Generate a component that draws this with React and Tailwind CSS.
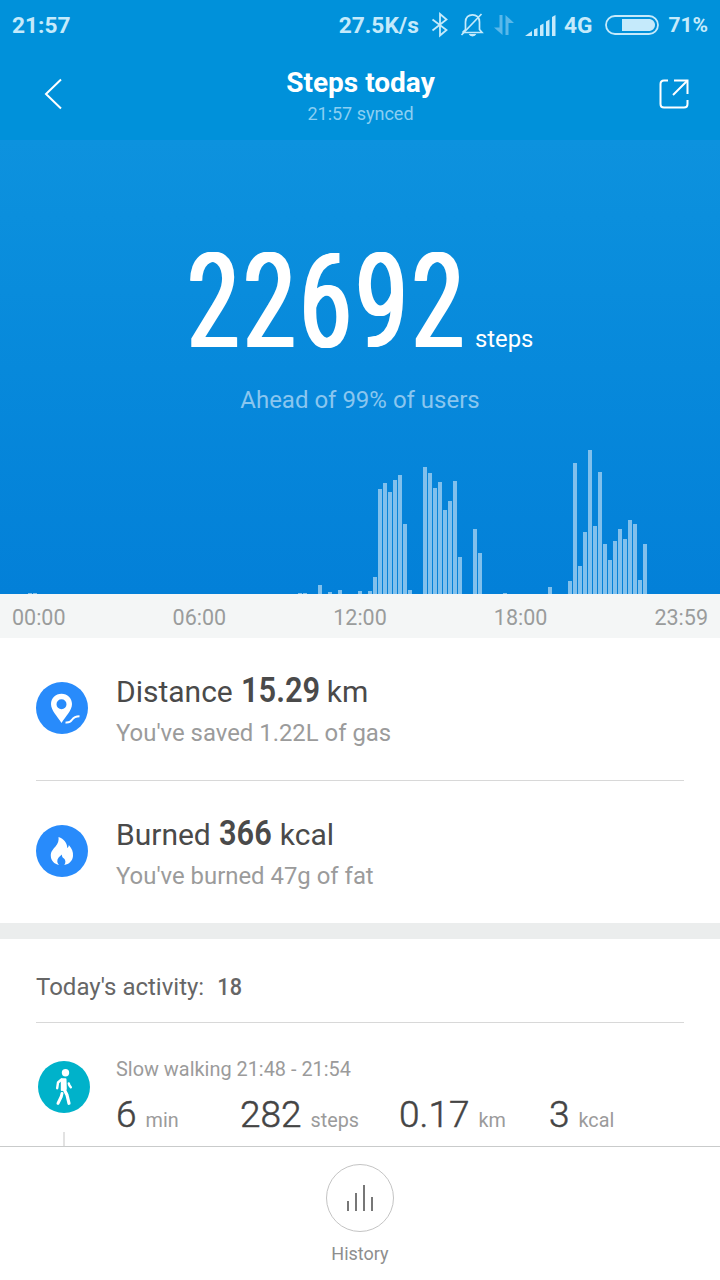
import clsx from "clsx";

// [slot, height] pairs, one slot for every ten minutes of the day
const STEP_BARS = [
    [5, 1], [6, 1], [59, 1], [60, 1], [63, 9], [65, 2], [67, 4], [71, 3],
    [73, 3], [74, 17], [75, 105], [76, 111], [77, 102], [78, 114], [79, 119], [80, 70], [81, 4],
    [84, 127], [85, 121], [86, 106], [87, 112], [88, 84], [89, 93], [90, 113], [91, 37],
    [94, 65], [95, 41], [100, 1], [109, 7],
    [113, 13], [114, 131], [115, 28], [116, 62], [117, 144], [118, 68], [119, 122], [120, 50],
    [121, 34], [122, 53], [123, 65], [124, 55], [125, 74], [126, 70], [127, 14], [128, 50],
];

const slots = Array.from({length: 143}, (_, i) => {
    const bar = STEP_BARS.find(([slot]) => slot === i);
    return bar ? bar[1] : 0;
});

const BluetoothIcon = () => (
    <svg width="18" height="26" viewBox="0 0 18 26" fill="none" stroke="currentColor" strokeWidth="1.8">
        <path d="M1.5 7.5 L15.5 18 L9 23.5 V2 L15.5 7.5 L1.5 18.5"/>
    </svg>
);

const MutedBellIcon = () => (
    <svg width="24" height="26" viewBox="0 0 24 26" fill="none" stroke="currentColor" strokeWidth="1.7">
        <path d="M2.5 20.5 H22 L19.5 17.5 V10 C19.5 5.5 16.5 2.8 12.5 2.8 C8.5 2.8 5.5 5.5 5.5 10 V17.5 L2.5 20.5"/>
        <path d="M1.5 23 L21.5 2"/>
        <path d="M9.5 22 C10.5 24.2 14.5 24.2 15.5 22" fill="currentColor"/>
    </svg>
);

const DataIcon = () => (
    <svg width="20" height="20" viewBox="0 0 20 20" fill="currentColor">
        <path d="M5.5 0 H8.5 V20 L0 12.5 H5.5 Z"/>
        <path d="M11.5 0 L20 8 H14.5 V20 H11.5 Z"/>
    </svg>
);

const SignalIcon = () => (
    <svg width="31" height="22" viewBox="0 0 31 22" fill="currentColor">
        <path d="M0 22 L7 17 V22 Z"/>
        <path d="M9 15.5 L12.5 14 V22 H9 Z"/>
        <path d="M15 11.5 L18.5 9.5 V22 H15 Z"/>
        <path d="M21 7.5 L24.5 5.5 V22 H21 Z"/>
        <path d="M27 3 L30.5 1 V22 H27 Z"/>
    </svg>
);

const BatteryIcon = () => (
    <svg width="54" height="20" viewBox="0 0 54 20">
        <rect x="1" y="1" width="52" height="18" rx="9" fill="none" stroke="currentColor" strokeWidth="1.8"/>
        <path d="M17 4 H43.5 C47.5 4 50 6.7 50 10 C50 13.3 47.5 16 43.5 16 H17 Z" fill="currentColor"/>
    </svg>
);

const ShareIcon = () => (
    <svg width="30" height="30" viewBox="0 0 30 30" fill="none" stroke="currentColor" strokeWidth="2">
        <path d="M9 1.5 H5 C3 1.5 1.5 3 1.5 5 V25 C1.5 27 3 28.5 5 28.5 H25 C27 28.5 28.5 27 28.5 25 V21"/>
        <path d="M15 1.5 H28.5 V15"/>
        <path d="M28.5 1.5 L14 16"/>
    </svg>
);

const DistanceIcon = () => (
    <svg width="52" height="52" viewBox="0 0 52 52">
        <circle cx="26" cy="26" r="26" fill="#288bfb"/>
        <path fillRule="evenodd" fill="#fff"
              d="M25.5 11.7 C31.5 11.7 36 16.2 36 22 C36 28.5 29.5 34.5 25.5 41 C21.5 34.5 15 28.5 15 22 C15 16.2 19.5 11.7 25.5 11.7 Z M25.5 17.2 A5 5 0 1 0 25.5 27.2 A5 5 0 1 0 25.5 17.2 Z"/>
        <path d="M29.5 40.5 C33 41 34.5 40 36 37.8 C37.8 35.2 39.5 34.3 43.5 34.3" fill="none" stroke="#fff"
              strokeWidth="2"/>
    </svg>
);

const FlameIcon = () => (
    <svg width="52" height="52" viewBox="0 0 52 52">
        <circle cx="26" cy="26" r="26" fill="#288bfb"/>
        <path fill="#fff"
              d="M22.5 12 C28 14 31 17.5 31.3 23 C32.3 22.3 32.7 21.3 32.8 20 C36 23.5 37.3 27 37 31 C36.6 36 33 39.3 28.3 40 C30 37.5 29.6 35 28 33.5 C26.3 32.5 25.7 31 26 29.5 C23.5 31.5 21.2 33.5 21.3 36.3 C21.4 38 22 39 23.2 40 C18 39 15 35.5 14.8 31 C14.6 26.5 17 24.5 19.5 21.5 C22 18.5 23 15.5 22.5 12 Z"/>
    </svg>
);

const WalkingIcon = () => (
    <svg width="52" height="52" viewBox="0 0 52 52">
        <circle cx="26" cy="26" r="26" fill="#00b2ca"/>
        <circle cx="27.5" cy="11.7" r="3.7" fill="#fff"/>
        <path d="M23.8 18.2 H27.5 L27.8 28 L23.8 29 Z" fill="#fff" stroke="#fff" strokeWidth="2" strokeLinejoin="round"/>
        <g fill="none" stroke="#fff" strokeLinecap="round" strokeLinejoin="round">
            <path d="M23.5 18.5 L20 21.5 L19.2 27.2" strokeWidth="2.4"/>
            <path d="M30.8 22.5 L31.5 24.6 L32.8 26.3" strokeWidth="2.4"/>
            <path d="M26 28 L29 34 L31 42.3" strokeWidth="3.2"/>
            <path d="M24 32.5 L23.3 35.5 L20 42.3" strokeWidth="3"/>
        </g>
    </svg>
);

const SummaryRow = ({icon, label, value, valueWidth, unit, note}) => (
    <div className="flex h-[142px] pt-[31px]">
        <div className="w-20 pt-[13px]">{icon}</div>
        <div>
            <div className="flex h-11 items-baseline text-[30px] leading-[44px] whitespace-nowrap text-[#4a4a4a]">
                <span>{label}</span>
                <span className={clsx("ml-2", valueWidth)}>
                    <span className="inline-block origin-left scale-x-[.88] text-[35px] leading-[44px] font-semibold">{value}</span>
                </span>
                <span className="ml-2">{unit}</span>
            </div>
            <div className="mt-1 text-[23.9px] leading-[32px] text-[#9b9b9b]">{note}</div>
        </div>
    </div>
);

const Metric = ({value, unit, className}) => (
    <div className={clsx("flex items-baseline", className)}>
        <span className="text-[37px] leading-[44px] font-light text-[#444] [-webkit-text-stroke:.5px_#444]">{value}</span>
        <span className="ml-[9px] text-[19.8px] text-[#9b9b9b]">{unit}</span>
    </div>
);

const App = () => (
    <div className="flex h-[1280px] w-[720px] flex-col overflow-hidden bg-white font-[Roboto,sans-serif]">
        <div className="h-[140px] bg-[#0091da]">
            <div className="flex h-[50px] items-center pt-0.5 pr-3 pl-3 text-[22.7px] font-bold text-[#c5eafb]">
                <span>21:57</span>
                <span className="ml-auto">27.5K/s</span>
                <span className="-mt-0.5 ml-3"><BluetoothIcon/></span>
                <span className="-mt-0.5 ml-[11px]"><MutedBellIcon/></span>
                <span className="-mt-0.5 ml-2.5 text-[#5ab8e9]"><DataIcon/></span>
                <span className="-mt-0.5 ml-[11px]"><SignalIcon/></span>
                <span className="ml-2">4G</span>
                <span className="-mt-0.5 ml-[13px]"><BatteryIcon/></span>
                <span className="ml-[9px] text-[21px]">71%</span>
            </div>
            <div className="flex h-[90px] items-start justify-between pr-[31px] pl-11 text-white">
                <svg className="mt-7" width="18" height="32" viewBox="0 0 18 32" fill="none"
                     stroke="currentColor" strokeWidth="2">
                    <path d="M17 1.5 L2 16 L17 30.5"/>
                </svg>
                <div className="pt-4 text-center">
                    <div className="text-[28px] leading-[34px] font-bold">Steps today</div>
                    <div className="mt-0.5 text-[18px] leading-6 text-[#8bcff2]">21:57 synced</div>
                </div>
                <div className="mt-[29px]"><ShareIcon/></div>
            </div>
        </div>

        <div className="flex h-[454px] flex-col bg-linear-to-b from-[#0d92de] to-[#0380d8]">
            <div className="flex h-[234px] items-baseline pt-[84px] pl-[188px] text-white">
                <span className="w-[278px]">
                    <span className="inline-block origin-left scale-x-[.68] text-[132px] leading-[156px] font-normal tracking-[8.4px] [text-shadow:-3px_0_#fff,3px_0_#fff,-1.5px_0_#fff,1.5px_0_#fff]">22692</span>
                </span>
                <span className="ml-[9px] text-[23.8px]">steps</span>
            </div>
            <div className="mt-2.5 text-center text-[24px] leading-8 text-[#8ac6ef]">Ahead of 99% of users</div>
            <div className="mt-auto flex items-end gap-px pl-[3px]">
                {slots.map((height, i) => (
                    <div key={i} className="w-1 bg-[#81c0ec]" style={{height}}/>
                ))}
            </div>
        </div>

        <div className="flex h-11 items-center justify-between bg-[#f4f6f6] px-3 pt-1 text-[21.5px] text-[#9a9c9c]">
            <span>00:00</span>
            <span>06:00</span>
            <span>12:00</span>
            <span>18:00</span>
            <span>23:59</span>
        </div>

        <div className="h-[285px] px-9">
            <SummaryRow icon={<DistanceIcon/>} label="Distance" value="15.29" valueWidth="w-[78px]" unit="km"
                        note="You've saved 1.22L of gas"/>
            <div className="h-px bg-[#d8d8d8]"/>
            <SummaryRow icon={<FlameIcon/>} label="Burned" value="366" valueWidth="w-[53px]" unit="kcal"
                        note="You've burned 47g of fat"/>
        </div>

        <div className="h-4 bg-[#ebeded]"/>

        <div className="flex h-[207px] flex-col px-9">
            <div className="flex h-[83px] items-center pt-3 text-[24px] text-[#666]">
                <span>Today's activity:</span>
                <span className="ml-3 scale-x-[.9] font-medium">18</span>
            </div>
            <div className="h-px shrink-0 bg-[#d8d8d8]"/>
            <div className="flex grow">
                <div className="flex w-20 flex-col pt-[38px] pl-0.5">
                    <WalkingIcon/>
                    <div className="mt-[19px] ml-[25px] w-0.5 grow bg-[#e2e2e2]"/>
                </div>
                <div className="pt-[35px]">
                    <div className="text-[19.9px] leading-6 text-[#9b9b9b]">Slow walking 21:48 - 21:54</div>
                    <div className="mt-[11px] flex">
                        <Metric className="w-[124px]" value="6" unit="min"/>
                        <Metric className="w-[159px]" value="282" unit="steps"/>
                        <Metric className="w-[150px]" value="0.17" unit="km"/>
                        <Metric value="3" unit="kcal"/>
                    </div>
                </div>
            </div>
        </div>

        <div className="flex grow flex-col items-center border-t border-[#c9cbcb] pt-[17px]">
            <button className="flex size-[68px] items-center justify-center rounded-full border border-[#c4c4c4]">
                <svg width="28" height="26" viewBox="0 0 28 26" fill="#777">
                    <rect x="1" y="16" width="2" height="10"/>
                    <rect x="9" y="8" width="2" height="18"/>
                    <rect x="17" y="0" width="2" height="26"/>
                    <rect x="25" y="12" width="2" height="14"/>
                </svg>
            </button>
            <span className="mt-2.5 text-[18px] leading-6 text-[#8e8e8e]">History</span>
        </div>
    </div>
);

export default App;
